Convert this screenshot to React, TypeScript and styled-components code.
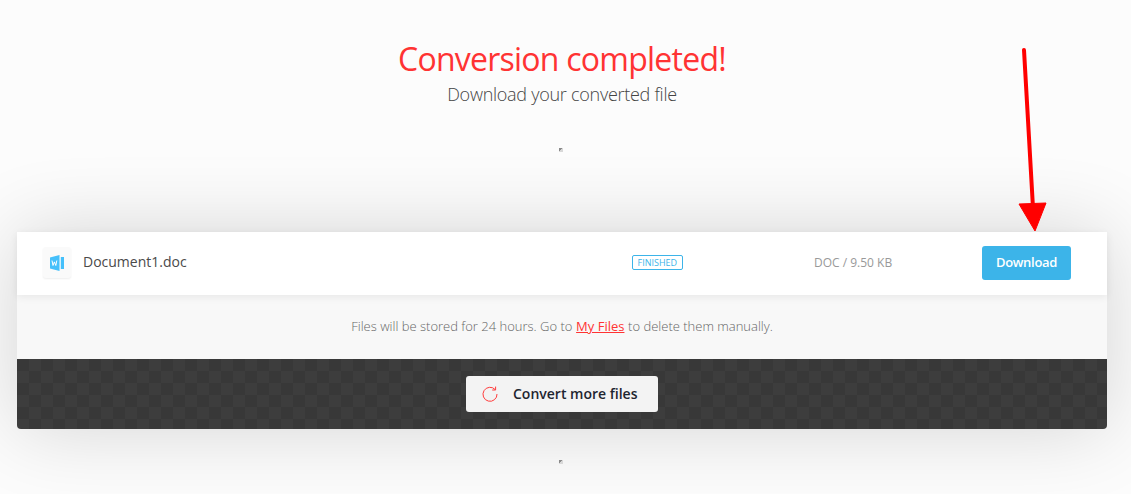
import React from "react";
import styled, { createGlobalStyle } from "styled-components";

const GlobalStyle = createGlobalStyle`
  html, body {
    margin: 0;
    padding: 0;
    height: 494px;
    overflow: hidden;
    background: #fcfcfc;
    font-family: "Open Sans", "Liberation Sans", sans-serif;
  }
`;

const Page = styled.div`
  position: relative;
  width: 1124px;
  height: 494px;
  display: flex;
  flex-direction: column;
  align-items: center;
`;

const Title = styled.h1`
  margin: 37px 0 0;
  font-size: 32px;
  line-height: 44px;
  font-weight: 400;
  letter-spacing: -0.76px;
  color: #ff3333;
`;

const Subtitle = styled.p`
  margin: 0;
  font-size: 18px;
  line-height: 26px;
  font-weight: 300;
  letter-spacing: -0.27px;
  color: #444;
`;

const AdSlot = styled.div<{ $top: number }>`
  width: 4px;
  height: 4px;
  margin-top: ${({ $top }) => $top}px;
  margin-left: -2px;
  background: linear-gradient(135deg, #8a8a8a 50%, #d8d8d8 50%);
`;

const Card = styled.section`
  width: 1090px;
  margin-top: 80px;
  border-radius: 0 0 4px 4px;
  background: #f8f8f8;
  box-shadow: 0 0 80px rgba(0, 0, 0, 0.16);
`;

const FileRow = styled.div`
  position: relative;
  height: 63px;
  box-sizing: border-box;
  padding: 0 36px 2px 0;
  display: grid;
  grid-template-columns: 615px 150px 1fr 89px;
  align-items: center;
  background: #fff;
  box-shadow: 0 2px 8px rgba(0, 0, 0, 0.07);
`;

const FileInfo = styled.div`
  display: flex;
  align-items: center;
  gap: 12px;
  padding-left: 26px;
`;

const FileIcon = styled.div`
  width: 28px;
  height: 31px;
  display: flex;
  align-items: center;
  justify-content: center;
  border-radius: 3px;
  background: #fafafa;
  box-shadow: 0 1px 2px rgba(0, 0, 0, 0.07);
`;

const FileName = styled.span`
  padding-bottom: 2px;
  font-size: 14px;
  color: #4a4a4a;
`;

const Badge = styled.span`
  justify-self: start;
  padding: 0 4.5px;
  height: 13px;
  line-height: 13px;
  border: 1px solid #3cb4e9;
  border-radius: 2px;
  font-size: 9px;
  color: #3cb4e9;
`;

const FileMeta = styled.span`
  font-size: 12px;
  color: #999;
  padding-left: 32px;
`;

const DownloadButton = styled.button`
  width: 89px;
  height: 34px;
  padding: 0 0 2px;
  border: 0;
  border-radius: 3px;
  background: #3cb4e9;
  color: #fff;
  font-family: inherit;
  font-size: 13px;
  font-weight: 600;
  letter-spacing: -0.3px;
`;

const Note = styled.p`
  margin: 0;
  height: 64px;
  box-sizing: border-box;
  padding-bottom: 2px;
  display: flex;
  align-items: center;
  justify-content: center;
  gap: 0.28em;
  font-size: 13px;
  font-weight: 300;
  color: #666;
`;

const NoteLink = styled.a`
  font-weight: 400;
  color: #ff3333;
  text-decoration: underline;
`;

const ActionBar = styled.div`
  height: 70px;
  display: flex;
  align-items: center;
  justify-content: center;
  border-radius: 0 0 4px 4px;
  background-color: #383838;
  background-image: conic-gradient(
    #3d3d3d 25%,
    #383838 0 50%,
    #3d3d3d 0 75%,
    #383838 0
  );
  background-size: 24px 24px;
`;

const ConvertButton = styled.button`
  width: 192px;
  height: 36px;
  display: flex;
  align-items: center;
  gap: 15px;
  padding: 0 0 0 16px;
  border: 0;
  border-radius: 3px;
  background: #f3f3f3;
  color: #1e2530;
  font-family: inherit;
  font-size: 14px;
  font-weight: 600;
`;

const ConvertLabel = styled.span`
  padding-bottom: 2px;
`;

const Arrow = styled.svg`
  position: absolute;
  left: 1010px;
  top: 40px;
`;

const App = () => (
  <Page>
    <GlobalStyle />
    <Title>Conversion completed!</Title>
    <Subtitle>Download your converted file</Subtitle>
    <AdSlot $top={41} />
    <Card>
      <FileRow>
        <FileInfo>
          <FileIcon>
            <svg width="14" height="16" viewBox="0 0 14 16">
              <path d="M0 2.5 9.5 0v16L0 13.5z" fill="#45c0fb" />
              <rect x="10.8" y="2" width="3.2" height="12" fill="#45c0fb" />
              <path
                d="M2 5.5l1 5 1.4-3.6L5.8 10.500l1-5"
                fill="none"
                stroke="#fff"
                strokeWidth="1"
              />
            </svg>
          </FileIcon>
          <FileName>Document1.doc</FileName>
        </FileInfo>
        <Badge>FINISHED</Badge>
        <FileMeta>DOC / 9.50 KB</FileMeta>
        <DownloadButton>Download</DownloadButton>
      </FileRow>
      <Note>
        Files will be stored for 24 hours. Go to <NoteLink>My Files</NoteLink> to
        delete them manually.
      </Note>
      <ActionBar>
        <ConvertButton>
          <svg
            width="16"
            height="16"
            viewBox="0 0 16 16"
            fill="none"
            stroke="#ff3b3b"
            strokeWidth="1"
          >
            <path d="M13.2 3.6A7 7 0 1 0 15 8" />
            <path d="M13.6 0.6v3.4h-3.4" />
          </svg>
          <ConvertLabel>Convert more files</ConvertLabel>
        </ConvertButton>
      </ActionBar>
    </Card>
    <AdSlot $top={31} />
    <Arrow width="50" height="200" viewBox="0 0 50 200">
      <path
        d="M14 10 23 168"
        stroke="#ff0000"
        strokeWidth="4"
        strokeLinecap="round"
        fill="none"
      />
      <path d="M9 164 36 163 25 191z" fill="#ff0000" stroke="#ff0000" strokeLinejoin="round" />
    </Arrow>
  </Page>
);

export default App;
